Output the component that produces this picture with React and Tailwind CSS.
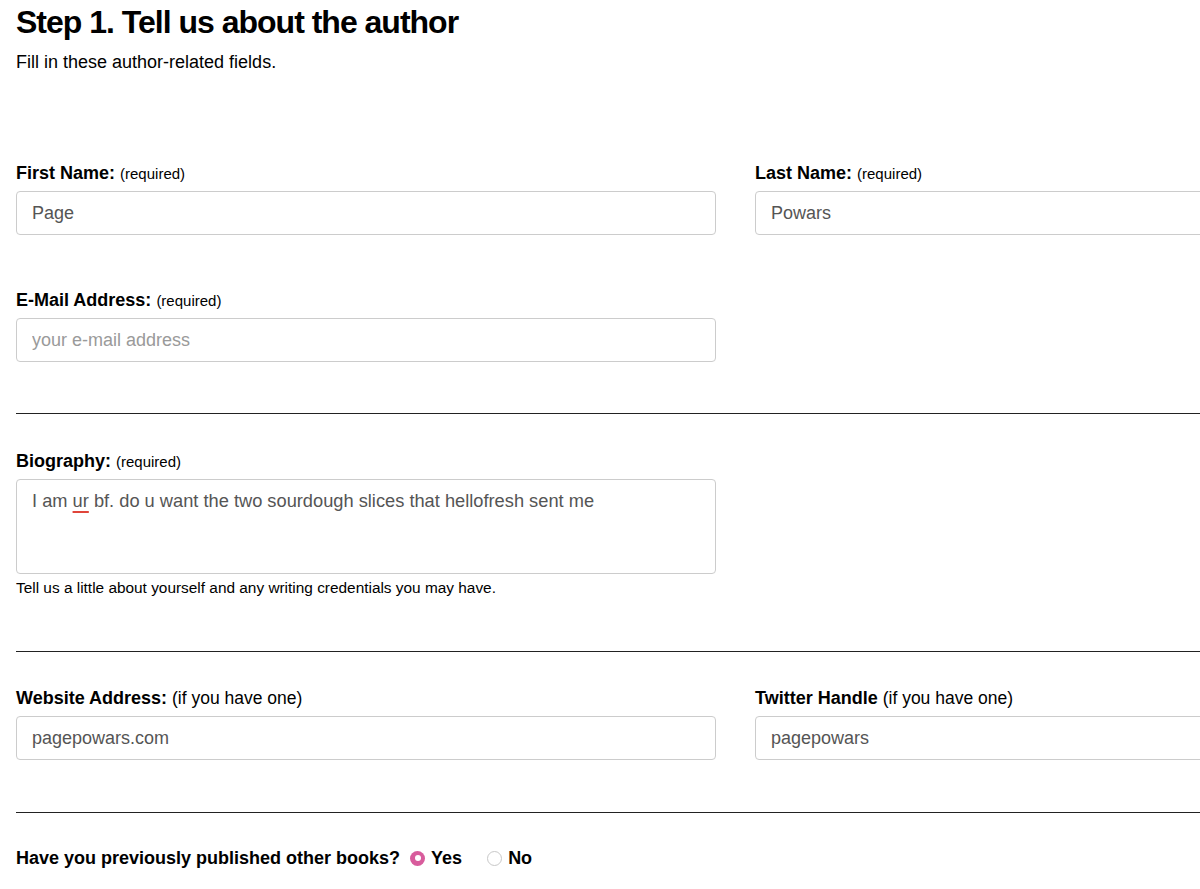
import React, { useState } from "react";

const font = { fontFamily: '"Liberation Sans", Arial, Helvetica, sans-serif' };

function Label({ title, note, noteClass = "text-[15px]" }) {
  return (
    <div className="flex h-[20px] items-baseline gap-[5px] leading-[20px] text-black">
      <span className="text-[18px] font-bold">{title}</span>
      <span className={noteClass}>{note}</span>
    </div>
  );
}

function TextField({ value, placeholder }) {
  return (
    <input
      type="text"
      defaultValue={value}
      placeholder={placeholder}
      className="mt-[8px] block h-[44px] w-full rounded-[4px] border border-[#cccccc] bg-white px-[15px] text-[18px] text-[#555555] placeholder:text-[#9a9a9a] outline-none"
      style={font}
    />
  );
}

function Rule() {
  return <hr className="w-[1439px] border-0 border-t border-[#222222]" />;
}

function Radio({ checked, label, onClick }) {
  return (
    <label className="flex items-center gap-[6px] cursor-pointer" onClick={onClick}>
      {checked ? (
        <span className="flex h-[15px] w-[15px] items-center justify-center rounded-full bg-[#d85c9c]">
          <span className="h-[6px] w-[6px] rounded-full bg-white" />
        </span>
      ) : (
        <span className="h-[15px] w-[15px] rounded-full border border-[#c8c8c8] bg-white" />
      )}
      <span className="text-[18px] font-bold">{label}</span>
    </label>
  );
}

export default function App() {
  const [published, setPublished] = useState(true);

  return (
    <div className="w-full overflow-hidden bg-white text-black" style={font}>
      <div className="w-[1500px] pl-[16px]">
        <h1 className="mt-[2px] text-[32px] font-bold leading-[40px] tracking-[-1px]">
          Step 1. Tell us about the author
        </h1>
        <p className="mt-[10px] text-[18px] leading-[20px]">
          Fill in these author-related fields.
        </p>

        <div className="mt-[91px] flex gap-[39px]">
          <div className="w-[700px]">
            <Label title="First Name:" note="(required)" />
            <TextField value="Page" />
          </div>
          <div className="w-[700px]">
            <Label title="Last Name:" note="(required)" />
            <TextField value="Powars" />
          </div>
        </div>

        <div className="mt-[55px] w-[700px]">
          <Label title="E-Mail Address:" note="(required)" />
          <TextField placeholder="your e-mail address" />
        </div>

        <div className="mt-[51px]">
          <Rule />
        </div>

        <div className="mt-[37px] w-[700px]">
          <Label title="Biography:" note="(required)" />
          <div className="mt-[8px] h-[95px] w-full rounded-[4px] border border-[#cccccc] bg-white px-[15px] pt-[10px] text-[18.25px] leading-[22px] text-[#555555]">
            I am{" "}
            <span className="underline decoration-[#e0453a] decoration-2 underline-offset-[4px]">
              ur
            </span>{" "}
            bf. do u want the two sourdough slices that hellofresh sent me
          </div>
          <p className="mt-[5px] text-[15.4px] leading-[18px]">
            Tell us a little about yourself and any writing credentials you may have.
          </p>
        </div>

        <div className="mt-[54px]">
          <Rule />
        </div>

        <div className="mt-[36px] flex gap-[39px]">
          <div className="w-[700px]">
            <Label title="Website Address:" note="(if you have one)" noteClass="text-[17.5px]" />
            <TextField value="pagepowars.com" />
          </div>
          <div className="w-[700px]">
            <Label title="Twitter Handle" note="(if you have one)" noteClass="text-[17.5px]" />
            <TextField value="pagepowars" />
          </div>
        </div>

        <div className="mt-[52px]">
          <Rule />
        </div>

        <div className="mt-[35px] flex h-[20px] items-center">
          <span className="text-[18px] font-bold leading-[20px]">
            Have you previously published other books?
          </span>
          <div className="ml-[10px] flex items-center gap-[25px] leading-[20px]">
            <Radio checked={published} label="Yes" onClick={() => setPublished(true)} />
            <Radio checked={!published} label="No" onClick={() => setPublished(false)} />
          </div>
        </div>
        <div className="h-[40px]" />
      </div>
    </div>
  );
}
